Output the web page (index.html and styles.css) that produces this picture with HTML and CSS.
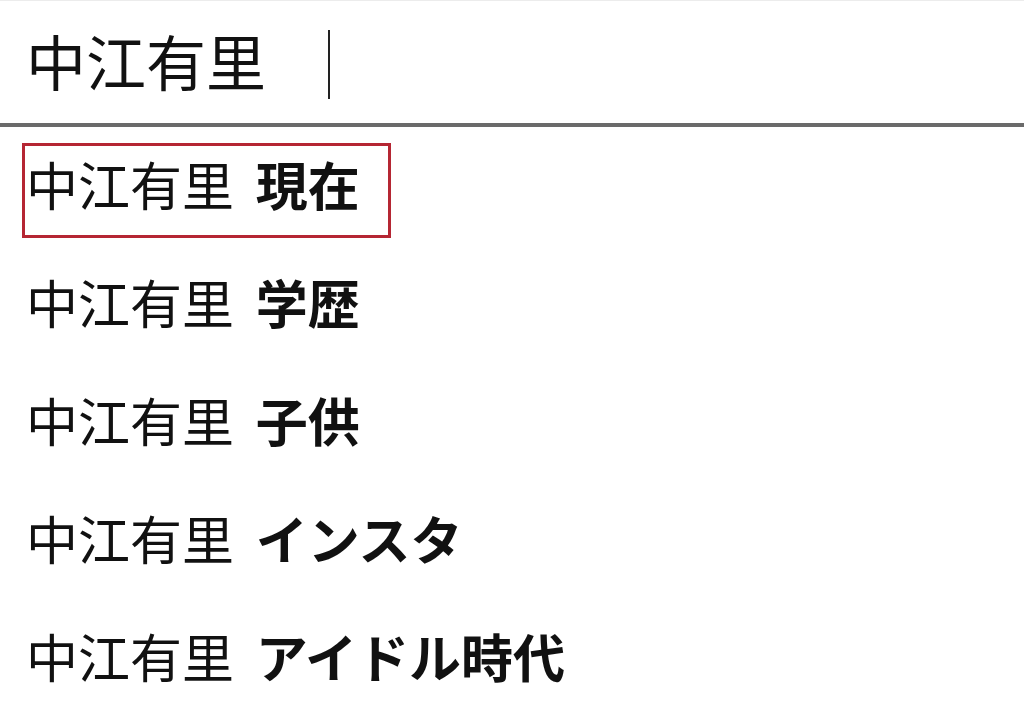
FILE: index.html
```html
<!DOCTYPE html>
<html lang="ja">
<head>
<meta charset="utf-8">
<link rel="stylesheet" href="styles.css">
</head>
<body>
<div class="search">
  <span class="query">中江有里</span><span class="caret"></span>
</div>
<ul class="suggestions">
  <li class="row"><span class="item selected">中江有里 <b>現在</b></span></li>
  <li class="row"><span class="item">中江有里 <b>学歴</b></span></li>
  <li class="row"><span class="item">中江有里 <b>子供</b></span></li>
  <li class="row"><span class="item">中江有里 <b>インスタ</b></span></li>
  <li class="row"><span class="item">中江有里 <b>アイドル時代</b></span></li>
</ul>
</body>
</html>
```
FILE: styles.css
```css
html, body {
  margin: 0;
  padding: 0;
  background: #fff;
}
body {
  width: 1024px;
  height: 706px;
  overflow: hidden;
  font-family: "Noto Sans CJK JP", "Noto Sans", sans-serif;
  color: #111;
}
.search {
  box-sizing: border-box;
  border-top: 1px solid #ececec;
  border-bottom: 4px solid #6a6a6a;
  height: 127px;
  display: flex;
  align-items: center;
  padding-left: 26px;
}
.query {
  font-size: 60px;
  line-height: 1;
  font-weight: 400;
  margin-top: -4px;
}
.caret {
  width: 2px;
  height: 69px;
  background: #222;
  margin-left: 62px;
  margin-top: 4px;
}
.suggestions {
  list-style: none;
  margin: 0;
  padding: 0;
}
.row {
  height: 118px;
  display: flex;
  align-items: center;
  padding-left: 22px;
}
.item {
  font-size: 52px;
  line-height: 1;
  font-weight: 400;
  border: 3px solid transparent;
  padding: 12px 28px 25px 1px;
  margin-top: 9px;
}
.item b {
  font-weight: 700;
  margin-left: 10px;
}
.selected {
  border-color: #b52633;
}
```
